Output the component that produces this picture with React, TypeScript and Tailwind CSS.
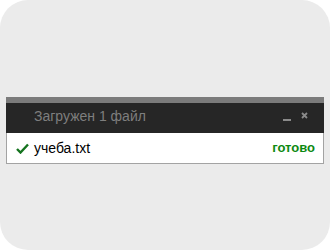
export default function App() {
  return (
    <div className="w-[330px] h-[250px] bg-white">
      <div className="w-full h-full rounded-[28px] bg-[#ebebeb] pt-[97px] px-[6px] font-['Liberation_Sans',Arial,sans-serif]">
        <div className="h-[6px] bg-[#7b7b7b]" />
        <div className="h-[30px] bg-[#262626] flex items-center pl-[28px] pr-[16px] pb-[4px]">
          <span className="text-[14px] text-[#7e7e7e]">Загружен 1 файл</span>
          <div className="ml-auto flex items-center gap-[10px]">
            <span className="block w-[8px] h-[2px] bg-[#8a8a8a] mt-[8px]" />
            <svg width="7" height="7" viewBox="0 0 7 7" className="mb-[2px]">
              <path d="M1 1 L6 6 M6 1 L1 6" stroke="#8a8a8a" strokeWidth="1.8" />
            </svg>
          </div>
        </div>
        <div className="h-[31px] bg-white border border-t-0 border-[#a3a3a3] flex items-center pl-[9px] pr-[8px]">
          <svg width="13" height="11" viewBox="0 0 13 11">
            <path d="M1 6 L4.5 9.5 L12 1.5" fill="none" stroke="#14731e" strokeWidth="2.4" />
          </svg>
          <span className="ml-[5px] text-[14px] text-black">учеба.txt</span>
          <span className="ml-auto text-[13px] font-bold text-[#0d8a12]">готово</span>
        </div>
      </div>
    </div>
  );
}
